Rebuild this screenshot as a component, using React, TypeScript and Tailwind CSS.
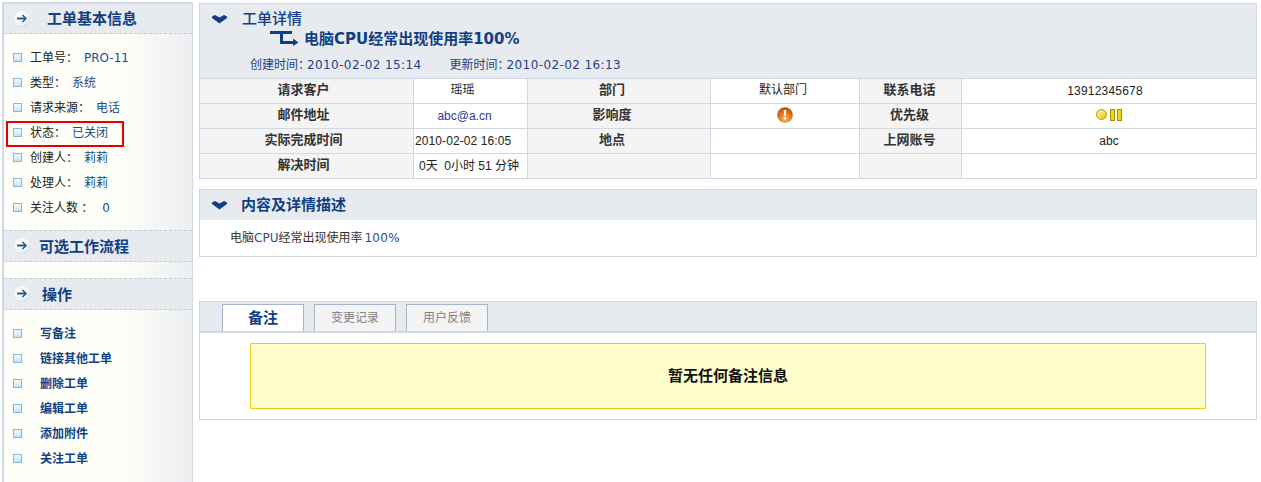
const cjk = "font-['Liberation_Sans','Noto_Sans_CJK_SC',sans-serif]";
const verdana = "font-['DejaVu_Sans','Noto_Sans_CJK_SC',sans-serif]";

function Bullet() {
  return (
    <span className="h-[9px] w-[9px] shrink-0 border border-[#86b7dd] bg-gradient-to-b from-[#f4fbff] to-[#c5e4f6]" />
  );
}

function ArrowBadge() {
  return (
    <svg width="18" height="18" viewBox="0 0 18 18" className="shrink-0">
      <defs>
        <radialGradient id="badge" cx="0.4" cy="0.35" r="0.7">
          <stop offset="0" stopColor="#ffffff" />
          <stop offset="0.7" stopColor="#f3f4f6" />
          <stop offset="1" stopColor="#d3d8df" />
        </radialGradient>
      </defs>
      <circle cx="9" cy="9" r="8" fill="url(#badge)" />
      <path d="M4 8.5h9" stroke="#2f5a88" strokeWidth="2" />
      <path d="M9.5 5l3.5 3.5-3.5 3.5" stroke="#2f5a88" strokeWidth="1.6" fill="none" />
    </svg>
  );
}

function Chevron() {
  return (
    <svg width="15" height="9" viewBox="0 0 15 9" className="shrink-0">
      <path d="M0 1.5l3-1.5 4.5 2.5L12 0l3 1.5v1.5L7.5 8.5 0 3z" fill="#113f85" />
    </svg>
  );
}

function SideHeader({ title, pad, top }: { title: string; pad: string; top?: boolean }) {
  return (
    <div
      className={`flex items-center border-b border-dashed border-b-[#c5cfdc] bg-[#e7ebf0] pl-[9px] ${
        top ? "h-[30px]" : "h-[32px] border-t border-t-[#c5cfdc]"
      }`}
    >
      <ArrowBadge />
      <h2 className={`${pad} text-[15px] leading-none font-bold text-[#113f85] ${cjk}`}>{title}</h2>
    </div>
  );
}

const infoRows = [
  { label: "工单号：", value: "PRO-11", gap: "ml-[6px]" },
  { label: "类型：", value: "系统", gap: "ml-[6px]" },
  { label: "请求来源：", value: "电话", gap: "ml-[6px]" },
  { label: "状态：", value: "已关闭", gap: "ml-[6px]" },
  { label: "创建人：", value: "莉莉", gap: "ml-[6px]" },
  { label: "处理人：", value: "莉莉", gap: "ml-[6px]" },
  { label: "关注人数 ：", value: "0", gap: "ml-[9px]" },
];

const actions = ["写备注", "链接其他工单", "删除工单", "编辑工单", "添加附件", "关注工单"];

function Sidebar() {
  return (
    <aside className="relative h-[482px] w-[191px] shrink-0 overflow-hidden border-t-2 border-r border-l-2 border-[#d0d8e3] bg-gradient-to-r from-[#fffff9] from-60% to-[#eceef1]">
      <SideHeader title="工单基本信息" pad="pl-[16px]" top />
      <ul className="flex flex-col pt-[11px] pb-[10px]">
        {infoRows.map((r) => (
          <li key={r.label} className="flex h-[25px] items-center pl-[9px] text-[12px] text-[#222]">
            <Bullet />
            <span className={`ml-[8px] whitespace-pre ${cjk}`}>{r.label}</span>
            <span className={`${r.gap} text-[#1a4a8c] ${verdana}`}>{r.value}</span>
          </li>
        ))}
      </ul>
      <SideHeader title="可选工作流程" pad="pl-[8px]" />
      <div className="h-[16px]" />
      <SideHeader title="操作" pad="pl-[11px]" />
      <ul className="flex flex-col pt-[11px]">
        {actions.map((a) => (
          <li key={a} className="flex h-[25px] items-center pl-[9px]">
            <Bullet />
            <span className={`ml-[18px] text-[12px] font-bold text-[#113f85] ${cjk}`}>{a}</span>
          </li>
        ))}
      </ul>
    </aside>
  );
}

function ImpactIcon() {
  return (
    <svg width="16" height="16" viewBox="0 0 16 16" className="mx-auto">
      <defs>
        <radialGradient id="impact" cx="0.5" cy="0.75" r="0.8">
          <stop offset="0" stopColor="#f6b76e" />
          <stop offset="0.6" stopColor="#d96a10" />
          <stop offset="1" stopColor="#a8500f" />
        </radialGradient>
      </defs>
      <circle cx="8" cy="8" r="7.8" fill="url(#impact)" />
      <path d="M6.8 3h2.4l-.5 6H7.3z" fill="#fff" />
      <circle cx="8" cy="11.3" r="1.2" fill="#fff" />
    </svg>
  );
}

function PriorityIcon() {
  return (
    <span className="flex items-center justify-center gap-[2px]">
      <span className="mr-[1px] h-[11px] w-[11px] rounded-full border border-[#b89a10] bg-gradient-to-br from-[#fff88a] to-[#e8c400]" />
      <span className="h-[12px] w-[5px] border border-[#b08c00] bg-[#f5d410]" />
      <span className="h-[12px] w-[5px] border border-[#b08c00] bg-[#f5d410]" />
    </span>
  );
}

const labelCell = `border border-[#d0d8e3] bg-[#f4f4f4] pb-[3px] text-center text-[13px] font-bold text-[#333] ${cjk}`;
const valueCell = `border border-[#d0d8e3] bg-white text-center text-[12px] text-[#222] ${cjk}`;

function DetailTable() {
  return (
    <table className="w-full table-fixed border-collapse">
      <colgroup>
        <col className="w-[214px]" />
        <col className="w-[114px]" />
        <col className="w-[183px]" />
        <col className="w-[149px]" />
        <col className="w-[102px]" />
        <col />
      </colgroup>
      <tbody>
        <tr className="h-[25px]">
          <td className={`${labelCell} pr-[6px]`}>请求客户</td>
          <td className={`${valueCell} pr-[16px] pb-[3px]`}>瑶瑶</td>
          <td className={`${labelCell} pr-[14px]`}>部门</td>
          <td className={`${valueCell} pr-[4px] pb-[3px]`}>默认部门</td>
          <td className={`${labelCell} pr-[2px]`}>联系电话</td>
          <td className={`${valueCell} pr-[8px] tracking-[0.2px]`}>13912345678</td>
        </tr>
        <tr className="h-[25px]">
          <td className={`${labelCell} pr-[6px]`}>邮件地址</td>
          <td className={`${valueCell} pr-[12px] text-[#33349a]`}>abc@a.cn</td>
          <td className={`${labelCell} pr-[14px]`}>影响度</td>
          <td className={`${valueCell} pb-[3px]`}>
            <ImpactIcon />
          </td>
          <td className={`${labelCell} pr-[2px]`}>优先级</td>
          <td className={`${valueCell} pb-[3px]`}>
            <PriorityIcon />
          </td>
        </tr>
        <tr className="h-[25px]">
          <td className={`${labelCell} pr-[6px]`}>实际完成时间</td>
          <td className={`${valueCell} whitespace-nowrap pl-[1px] text-left tracking-[0.1px]`}>2010-02-02 16:05</td>
          <td className={`${labelCell} pr-[14px]`}>地点</td>
          <td className={valueCell} />
          <td className={`${labelCell} pr-[2px]`}>上网账号</td>
          <td className={valueCell}>abc</td>
        </tr>
        <tr className="h-[25px]">
          <td className={`${labelCell} pr-[6px]`}>解决时间</td>
          <td className={`${valueCell} whitespace-pre pl-[5px] text-left`}>0天  0小时 51 分钟</td>
          <td className={labelCell} />
          <td className={valueCell} />
          <td className={labelCell} />
          <td className={valueCell} />
        </tr>
      </tbody>
    </table>
  );
}

function StepArrow() {
  return (
    <svg width="29" height="15" viewBox="0 0 29 15" className="shrink-0">
      <path d="M0 1.5h22M11.5 1.5v10h12" stroke="#113f85" strokeWidth="3" fill="none" />
      <path d="M23 7.5l5.5 4-5.5 3.5z" fill="#113f85" />
    </svg>
  );
}

function DetailPanel() {
  return (
    <section>
      <div className="h-[75px] border-x border-t border-[#d0d8e3] bg-[#e7ebf0]">
        <div className="flex items-center pt-[6px] pl-[12px]">
          <Chevron />
          <h2 className={`ml-[15px] text-[15px] leading-[18px] font-medium text-[#113f85] ${cjk}`}>工单详情</h2>
        </div>
        <div className="flex items-center pl-[70px]">
          <StepArrow />
          <span className={`ml-[5px] pt-[2px] text-[15px] leading-[18px] font-bold text-[#113f85] ${verdana}`}>
            电脑CPU经常出现使用率100%
          </span>
        </div>
        <div className={`flex pt-[9px] pl-[50px] text-[12px] leading-[16px] text-[#24408a] ${verdana}`}>
          <span className="w-[57px] whitespace-nowrap">创建时间：</span>
          <span className="tracking-[0.4px]">2010-02-02 15:14</span>
          <span className="ml-[28px] w-[57px] whitespace-nowrap">更新时间：</span>
          <span className="tracking-[0.4px]">2010-02-02 16:13</span>
        </div>
      </div>
      <DetailTable />
    </section>
  );
}

function DescriptionPanel() {
  return (
    <section className="mt-[10px] h-[68px] border border-[#d0d8e3]">
      <div className="flex h-[30px] items-center bg-[#e7ebf0] pl-[12px]">
        <Chevron />
        <h2 className={`ml-[14px] text-[15px] font-bold text-[#113f85] ${cjk}`}>内容及详情描述</h2>
      </div>
      <p className={`pt-[9px] pl-[30px] text-[12px] leading-[18px] text-[#333] ${verdana}`}>
        电脑<span className="text-[#2f4a8a]">CPU</span>经常出现使用率
        <span className="ml-[2px] tracking-[0.3px] text-[#2f4a8a]">100%</span>
      </p>
    </section>
  );
}

function NotesPanel() {
  const tabBase = `flex h-[27px] w-[82px] items-center justify-center border border-b-0 border-[#a5b5ca] ${cjk}`;
  return (
    <section className="mt-[44px] h-[119px] border border-[#d0d8e3]">
      <div className="flex h-[31px] items-end gap-[10px] border-b-2 border-[#d0d8e3] bg-[#e7ebf0] pl-[22px]">
        <div className={`${tabBase} bg-white text-[15px] font-bold text-[#113f85]`}>备注</div>
        <div className={`${tabBase} bg-[#f4f4f4] text-[12px] text-[#808080]`}>变更记录</div>
        <div className={`${tabBase} bg-[#f4f4f4] text-[12px] text-[#808080]`}>用户反馈</div>
      </div>
      <div className="px-[50px] pt-[10px]">
        <div
          className={`flex h-[66px] w-[956px] items-center justify-center border border-[#f0c81e] bg-[#ffffcc] text-[15px] font-bold text-[#111] ${cjk}`}
        >
          暂无任何备注信息
        </div>
      </div>
    </section>
  );
}

export default function App() {
  return (
    <div className="relative flex h-[482px] w-[1261px] gap-[6px] overflow-hidden bg-white pl-[2px]">
      <div className="pt-[2px]">
        <Sidebar />
      </div>
      <main className="w-[1058px] pt-[3px]">
        <DetailPanel />
        <DescriptionPanel />
        <NotesPanel />
      </main>
      {/* red annotation around the status row */}
      <div className="absolute top-[121px] left-[6px] h-[26px] w-[118px] border-2 border-[#e60000]" />
    </div>
  );
}
